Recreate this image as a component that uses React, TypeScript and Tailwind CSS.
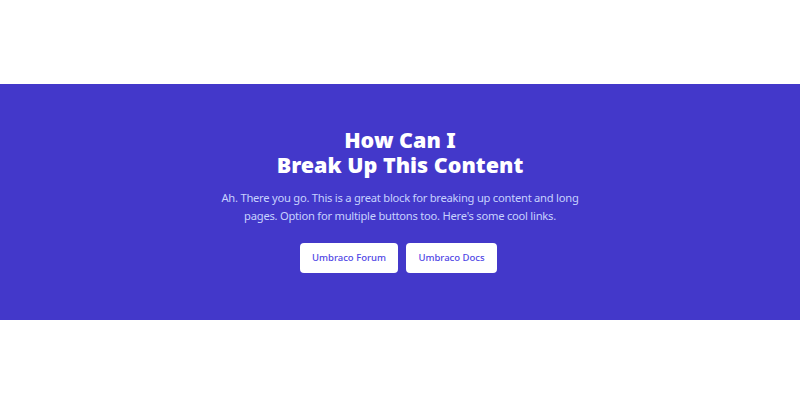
export default function App() {
  return (
    <div className="min-h-[404px] bg-white" style={{ fontFamily: '"Noto Sans", "Open Sans", sans-serif' }}>
      <div className="h-[84px]" />
      <section className="bg-[#4338ca] pb-[47px] pt-[43px]">
        <div className="mx-auto flex max-w-[420px] flex-col items-center text-center">
          <h2 className="text-[21.5px] font-black leading-[25px] text-white">
            How Can I
            <br />
            Break Up This Content
          </h2>
          <p className="mt-[12px] text-[11.2px] leading-[18px] tracking-[-0.25px] text-[#c7d2fe]">
            Ah. There you go. This is a great block for breaking up content and long
            <br />
            pages. Option for multiple buttons too. Here's some cool links.
          </p>
          <div className="mt-[18px] flex gap-2 pr-[3px]">
            <a href="#" className="flex h-[30px] w-[98px] items-center justify-center rounded bg-white text-[9.5px] font-medium text-[#4f46e5]">
              Umbraco Forum
            </a>
            <a href="#" className="flex h-[30px] w-[91px] items-center justify-center rounded bg-white text-[9.5px] font-medium text-[#4f46e5]">
              Umbraco Docs
            </a>
          </div>
        </div>
      </section>
    </div>
  );
}
